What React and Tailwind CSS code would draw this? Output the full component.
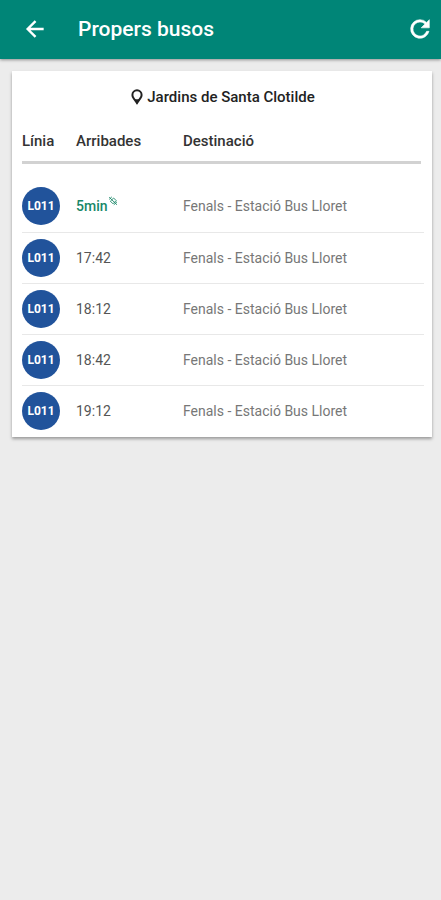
import React from "react";

const stop = "Jardins de Santa Clotilde";

const arrivals = [
    { line: "L011", time: "5min", live: true, destination: "Fenals - Estació Bus Lloret" },
    { line: "L011", time: "17:42", destination: "Fenals - Estació Bus Lloret" },
    { line: "L011", time: "18:12", destination: "Fenals - Estació Bus Lloret" },
    { line: "L011", time: "18:42", destination: "Fenals - Estació Bus Lloret" },
    { line: "L011", time: "19:12", destination: "Fenals - Estació Bus Lloret" },
];

function BackIcon() {
    return (
        <svg className="w-[26px] h-[26px]" viewBox="0 0 24 24" fill="none" stroke="currentColor" strokeWidth="2.2">
            <path d="M20 12H5.5M12.5 4.7 5.2 12l7.3 7.3" />
        </svg>
    );
}

function RefreshIcon() {
    return (
        <svg className="w-7 h-7" viewBox="0 0 24 24" fill="currentColor" stroke="currentColor" strokeWidth="0.5">
            <path d="M17.65 6.35A7.96 7.96 0 0 0 12 4a8 8 0 1 0 7.73 10h-2.08A6 6 0 1 1 12 6c1.66 0 3.14.69 4.22 1.78L13 11h7V4z" />
        </svg>
    );
}

function PinIcon() {
    return (
        <svg className="w-3 h-4" viewBox="0 0 12 16" fill="none" stroke="currentColor" strokeWidth="2">
            <path d="M6 1.3a4.6 4.6 0 0 0-4.6 4.6c0 1.2.5 2.3 1.2 3.3L6 14l3.4-4.8c.7-1 1.2-2.1 1.2-3.3A4.6 4.6 0 0 0 6 1.3z" />
            <path d="M3.6 10.2 6 15.4l2.4-5.2z" fill="currentColor" stroke="none" />
        </svg>
    );
}

function LiveIcon() {
    return (
        <svg className="w-[10px] h-[10px]" viewBox="0 0 10 10" fill="none" stroke="currentColor" strokeWidth="0.9">
            <path d="M1.2 3.4 3.8.9M2.4 5.2 5.6 2l2.6 2.6L5 7.8z" />
            <path d="M5.8 8.8 9 5.8M1.2 1.2 9 8.8" />
        </svg>
    );
}

export default function App() {
    return (
        <div className="min-h-screen bg-[#ececec] font-['Roboto',sans-serif]">
            <header className="flex items-center h-[59px] pl-[22px] pr-[7px] pb-px bg-[#008577] text-white shadow-[0_1px_3px_rgba(0,0,0,0.4)]">
                <button type="button" aria-label="Enrere">
                    <BackIcon />
                </button>
                <h1 className="ml-[30px] text-[21px] leading-7 font-medium">Propers busos</h1>
                <button type="button" aria-label="Actualitza" className="ml-auto">
                    <RefreshIcon />
                </button>
            </header>

            <main className="mt-3 ml-3 mr-[9px] pl-[10px] pr-2 pt-4 pb-px bg-white shadow-[0_2px_3px_rgba(0,0,0,0.35)]">
                <h2 className="flex items-center justify-center gap-1 h-5 text-[15px] font-medium text-[#222]">
                    <PinIcon />
                    {stop}
                </h2>

                <table className="w-full mt-4 table-fixed text-left text-[15px] leading-5">
                    <thead className="text-[#333]">
                        <tr>
                            <th className="w-[54px] p-0 font-medium">
                                <div className="h-[41px] pt-2 border-b-[3px] border-[#d2d2d2]">Línia</div>
                            </th>
                            <th className="w-[107px] p-0 font-medium">
                                <div className="h-[41px] pt-2 border-b-[3px] border-[#d2d2d2]">Arribades</div>
                            </th>
                            <th className="p-0 font-medium">
                                <div className="h-[41px] mr-[3px] pt-2 border-b-[3px] border-[#d2d2d2]">Destinació</div>
                            </th>
                        </tr>
                    </thead>
                    <tbody className="before:block before:h-[17px]">
                        {arrivals.map((a, i) => (
                            <tr key={i} className="h-[51px] border-b border-[#e8e8e8] last:border-b-0">
                                <td className="p-0 align-middle">
                                    <span className="flex items-center justify-center w-[38px] h-[38px] rounded-full bg-[#21539b] text-white text-xs font-bold">
                                        {a.line}
                                    </span>
                                </td>
                                <td className="p-0 align-middle">
                                    {a.live ? (
                                        <span className="flex text-sm font-medium text-[#188768]">
                                            {a.time}
                                            <LiveIcon />
                                        </span>
                                    ) : (
                                        <span className="block text-sm text-[#555]">{a.time}</span>
                                    )}
                                </td>
                                <td className="p-0 align-middle text-sm text-[#777]">{a.destination}</td>
                            </tr>
                        ))}
                    </tbody>
                </table>
            </main>
        </div>
    );
}
